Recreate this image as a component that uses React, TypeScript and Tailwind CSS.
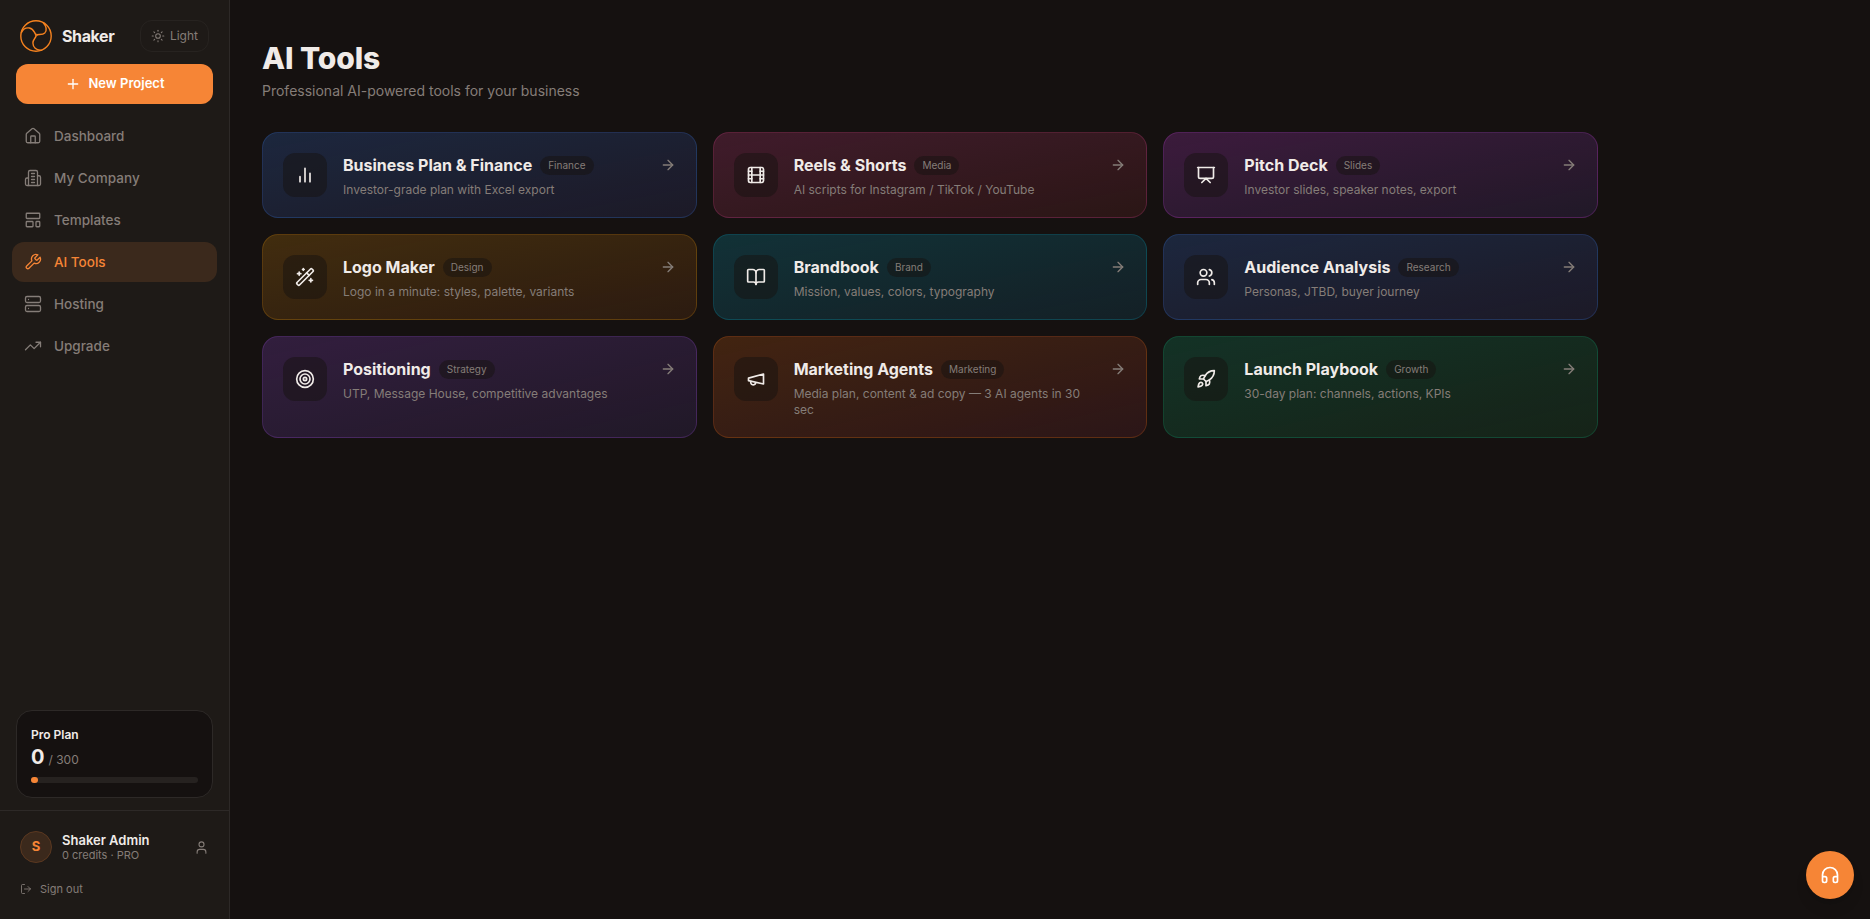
import type { ReactNode } from 'react';
import {
  ArrowRight,
  BookOpen,
  Film,
  Headphones,
  House,
  LayoutTemplate,
  LogOut,
  Plus,
  Presentation,
  Rocket,
  Server,
  Sun,
  Target,
  TrendingUp,
  User,
  Users,
  WandSparkles,
} from 'lucide-react';
import clsx from 'clsx';

type IconProps = { size?: number; strokeWidth?: number };

type Tool = {
  title: string;
  tag: string;
  description: string;
  icon: (props: IconProps) => ReactNode;
  tone: string;
};

function StrokeIcon({ size = 24, strokeWidth = 2, children }: IconProps & { children: ReactNode }) {
  return (
    <svg
      width={size}
      height={size}
      viewBox="0 0 24 24"
      fill="none"
      stroke="currentColor"
      strokeWidth={strokeWidth}
      strokeLinecap="round"
      strokeLinejoin="round"
    >
      {children}
    </svg>
  );
}

const BarsIcon = (props: IconProps) => (
  <StrokeIcon {...props}>
    <path d="M18 20V10M12 20V4M6 20v-6" />
  </StrokeIcon>
);

const MegaphoneIcon = (props: IconProps) => (
  <StrokeIcon {...props}>
    <path d="m3 11 18-5v12L3 14v-3z" />
    <path d="M11.6 16.8a3 3 0 1 1-5.8-1.6" />
  </StrokeIcon>
);

const BuildingIcon = (props: IconProps) => (
  <StrokeIcon {...props}>
    <path d="M6 22V4a2 2 0 0 1 2-2h8a2 2 0 0 1 2 2v18Z" />
    <path d="M6 12H4a2 2 0 0 0-2 2v6a2 2 0 0 0 2 2h2" />
    <path d="M18 9h2a2 2 0 0 1 2 2v9a2 2 0 0 1-2 2h-2" />
    <path d="M10 6h4M10 10h4M10 14h4M10 18h4" />
  </StrokeIcon>
);

const WrenchIcon = (props: IconProps) => (
  <StrokeIcon {...props}>
    <path d="M14.7 6.3a1 1 0 0 0 0 1.4l1.6 1.6a1 1 0 0 0 1.4 0l3.77-3.77a6 6 0 0 1-7.94 7.94l-6.91 6.91a2.12 2.12 0 0 1-3-3l6.91-6.91a6 6 0 0 1 7.94-7.94l-3.76 3.76z" />
  </StrokeIcon>
);

const NAV = [
  { label: 'Dashboard', icon: House },
  { label: 'My Company', icon: BuildingIcon },
  { label: 'Templates', icon: LayoutTemplate },
  { label: 'AI Tools', icon: WrenchIcon, active: true },
  { label: 'Hosting', icon: Server },
  { label: 'Upgrade', icon: TrendingUp },
];

const TOOLS: Tool[] = [
  {
    title: 'Business Plan & Finance',
    tag: 'Finance',
    description: 'Investor-grade plan with Excel export',
    icon: BarsIcon,
    tone: 'from-[#3b82f633] to-[#6366f11a] border-[#3b82f633]',
  },
  {
    title: 'Reels & Shorts',
    tag: 'Media',
    description: 'AI scripts for Instagram / TikTok / YouTube',
    icon: Film,
    tone: 'from-[#ec489933] to-[#ef44441a] border-[#ec489933]',
  },
  {
    title: 'Pitch Deck',
    tag: 'Slides',
    description: 'Investor slides, speaker notes, export',
    icon: Presentation,
    tone: 'from-[#d946ef33] to-[#8b5cf61a] border-[#d946ef33]',
  },
  {
    title: 'Logo Maker',
    tag: 'Design',
    description: 'Logo in a minute: styles, palette, variants',
    icon: WandSparkles,
    tone: 'from-[#f59e0b33] to-[#f973161a] border-[#f59e0b33]',
  },
  {
    title: 'Brandbook',
    tag: 'Brand',
    description: 'Mission, values, colors, typography',
    icon: BookOpen,
    tone: 'from-[#06b6d433] to-[#0ea5e91a] border-[#06b6d433]',
  },
  {
    title: 'Audience Analysis',
    tag: 'Research',
    description: 'Personas, JTBD, buyer journey',
    icon: Users,
    tone: 'from-[#3b82f633] to-[#6366f11a] border-[#3b82f633]',
  },
  {
    title: 'Positioning',
    tag: 'Strategy',
    description: 'UTP, Message House, competitive advantages',
    icon: Target,
    tone: 'from-[#a855f733] to-[#8b5cf61a] border-[#a855f733]',
  },
  {
    title: 'Marketing Agents',
    tag: 'Marketing',
    description: 'Media plan, content & ad copy — 3 AI agents in 30 sec',
    icon: MegaphoneIcon,
    tone: 'from-[#f9731633] to-[#f43f5e1a] border-[#f9731633]',
  },
  {
    title: 'Launch Playbook',
    tag: 'Growth',
    description: '30-day plan: channels, actions, KPIs',
    icon: Rocket,
    tone: 'from-[#10b98133] to-[#22c55e1a] border-[#10b98133]',
  },
];

function Logo() {
  return (
    <svg width="32" height="32" viewBox="0 0 32 32" fill="none" stroke="#f5821f" strokeWidth="1.4" strokeLinecap="round">
      <circle cx="16" cy="16" r="15.2" />
      <circle cx="16.2" cy="15" r="0.9" strokeWidth="1" />
      <path d="M1.500 12.600C3 9 6.500 7.600 9.500 8C13.500 8.700 14 12 15.600 14.300" />
      <path d="M23.500 3C26 6 27.200 10 24.800 12.900C22.800 15 19.500 14.300 17 14.800" />
      <path d="M21.500 30.200C16 30.800 13 27 12.900 23C12.900 19.500 15.500 18.300 16 16" />
    </svg>
  );
}

function ToolCard({ tool }: { tool: Tool }) {
  const Icon = tool.icon;
  return (
    <div className={clsx('flex items-start gap-4 rounded-2xl border bg-linear-to-br/srgb p-5', tool.tone)}>
      <div className="flex h-11 w-11 shrink-0 items-center justify-center rounded-xl bg-[#151110]/50 text-[#f0ebe8]">
        <Icon size={20} strokeWidth={2} />
      </div>
      <div className="-mb-px min-w-0 flex-1">
        <div className="flex items-center gap-2">
          <h3 className="text-base leading-[25px] font-bold text-[#f0ebe8]">{tool.title}</h3>
          <span className="rounded-full bg-[#151110]/50 px-2 py-0.5 text-[10px] leading-[15px] text-[#857d78]">
            {tool.tag}
          </span>
        </div>
        <p className="mt-1 text-xs leading-4 text-[#857d78]">{tool.description}</p>
      </div>
      <ArrowRight size={16} className="mt-1 shrink-0 text-[#857d78]" />
    </div>
  );
}

function Sidebar() {
  return (
    <aside className="flex w-[230px] shrink-0 flex-col border-r border-[#2d2927] bg-[#1e1a17]">
      <div className="flex h-16 items-center px-5 pt-2">
        <Logo />
        <span className="ml-2.5 text-base font-bold tracking-tight text-[#f0ebe8]">Shaker</span>
        <button className="ml-auto flex h-8 items-center gap-[5px] rounded-xl border border-[#272320] px-2.5 text-xs text-[#857d78]">
          <Sun size={14} strokeWidth={1.75} />
          Light
        </button>
      </div>

      <button className="mx-4 flex h-10 shrink-0 items-center justify-center gap-2 rounded-xl bg-[#f68536] text-[13px] font-semibold text-white">
        <Plus size={16} />
        New Project
      </button>

      <nav className="mt-3 flex flex-1 flex-col gap-0.5 px-3">
        {NAV.map(({ label, icon: Icon, active }) => (
          <a
            key={label}
            className={clsx(
              'flex h-10 items-center gap-3 rounded-xl px-3 text-[13.5px] font-medium',
              active ? 'bg-[#3b291c] text-[#f68536]' : 'text-[#857d78]',
            )}
          >
            <Icon size={18} strokeWidth={1.75} />
            {label}
          </a>
        ))}
      </nav>

      <div className="mx-4 mb-3 h-[88px] rounded-2xl border border-[#2d2927] bg-[#151110] px-3.5 pt-[15px]">
        <div className="text-xs leading-[18px] font-semibold text-[#f0ebe8]">Pro Plan</div>
        <div className="-mt-px flex items-baseline gap-1 leading-7">
          <span className="text-xl leading-7 font-bold text-[#f0ebe8]">0</span>
          <span className="text-xs text-[#857d78]">/ 300</span>
        </div>
        <div className="mt-1.5 h-1.5 rounded-full bg-[#262220]">
          <div className="h-1.5 w-[7px] rounded-full bg-[#f68536]" />
        </div>
      </div>

      <div className="h-[109px] border-t border-[#2d2927] px-5 pt-5">
        <div className="flex items-center">
          <div className="flex h-8 w-8 items-center justify-center rounded-full border border-[#5b3820] bg-[#3b291c] text-[13px] font-bold text-[#f68536]">
            S
          </div>
          <div className="ml-2.5">
            <div className="text-[13px] leading-4 font-semibold text-[#f0ebe8]">Shaker Admin</div>
            <div className="text-[11px] leading-[14px] text-[#857d78]">0 credits · PRO</div>
          </div>
          <User size={15} strokeWidth={1.75} className="ml-auto text-[#857d78]" />
        </div>
        <button className="mt-[18px] flex items-center gap-2 text-[11px] leading-4 text-[#857d78]">
          <LogOut size={12} strokeWidth={1.75} />
          Sign out
        </button>
      </div>
    </aside>
  );
}

export default function App() {
  return (
    <div className="relative flex h-screen overflow-hidden bg-[#151110] font-[Inter,sans-serif] antialiased">
      <Sidebar />

      <main className="flex-1 px-8 pt-10">
        <div className="max-w-[1336px]">
          <h1 className="text-3xl leading-[37px] font-extrabold tracking-[-0.1px] text-[#f0ebe8]">AI Tools</h1>
          <p className="mt-1 text-sm leading-5 text-[#857d78]">Professional AI-powered tools for your business</p>

          <div className="mt-[31px] grid grid-cols-3 gap-4">
            {TOOLS.map((tool) => (
              <ToolCard key={tool.title} tool={tool} />
            ))}
          </div>
        </div>
      </main>

      {/* Support */}
      <button className="absolute right-4 bottom-5 flex h-12 w-12 items-center justify-center rounded-full bg-[#f68536] text-white shadow-lg">
        <Headphones size={20} />
      </button>
    </div>
  );
}
